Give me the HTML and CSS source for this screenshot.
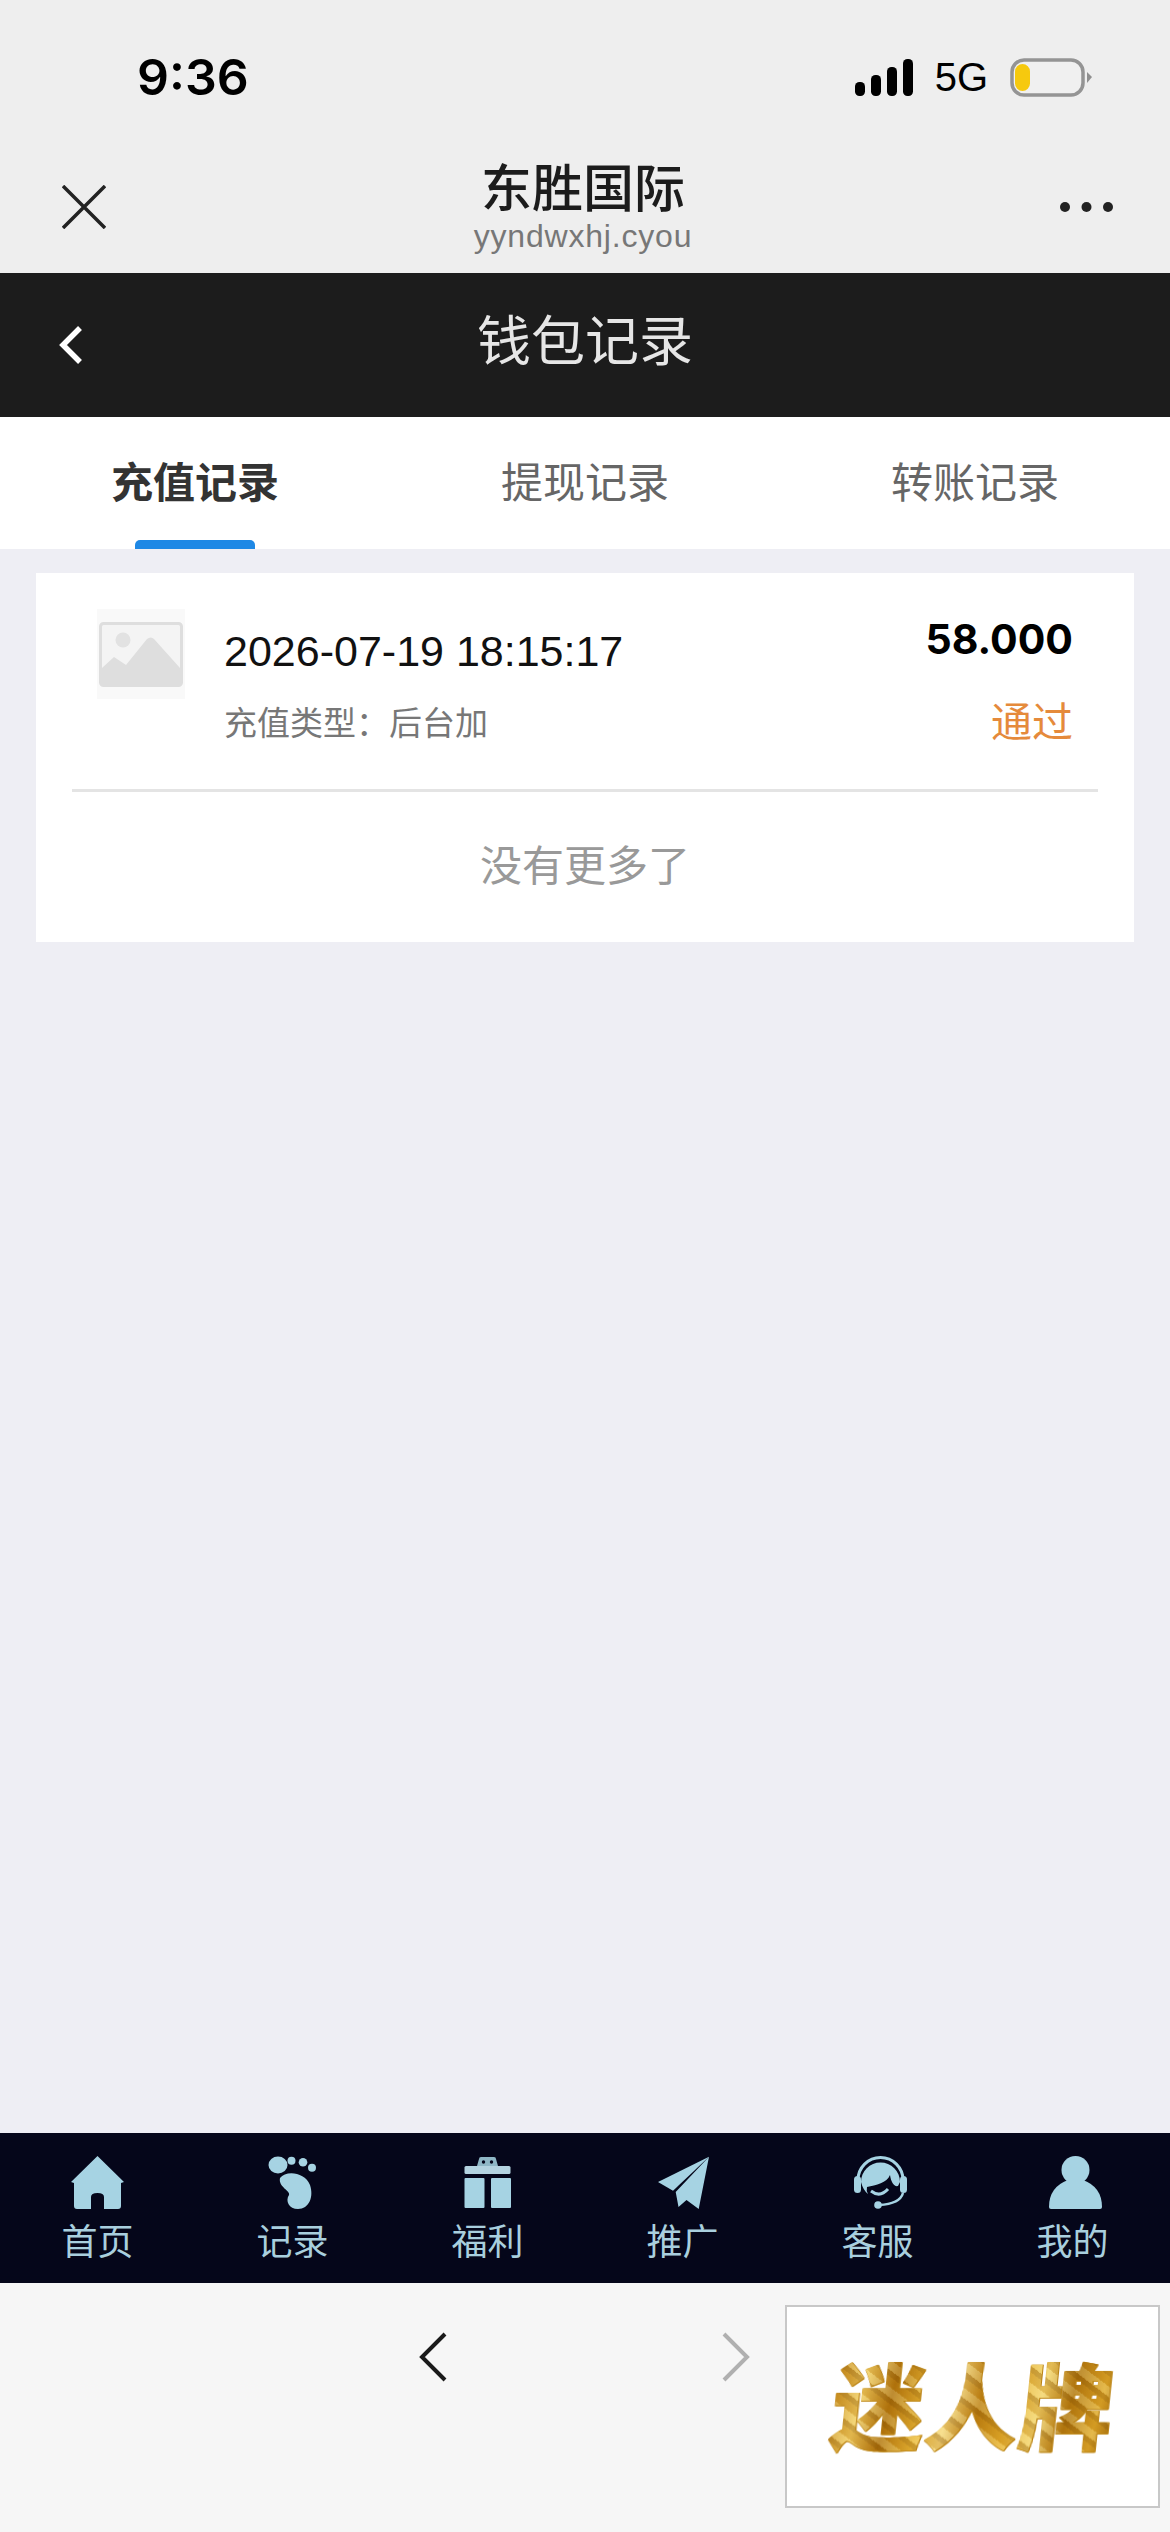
FILE: index.html
```html
<!DOCTYPE html>
<html>
	<head>
		<meta charset="utf-8">
		<title>钱包记录</title>
		<link rel="stylesheet" href="styles.css">
	</head>
	<body>
	<div class="phone">
		<div class="top_area">
			<div class="status_bar">
				<div class="time">9:36</div>
				<div class="status_right">
					<svg width="58" height="37" viewBox="0 0 58 37">
						<rect x="0" y="23" width="10" height="14" rx="4.5" fill="#000"/>
						<rect x="16" y="16" width="10" height="21" rx="4.5" fill="#000"/>
						<rect x="32" y="8" width="10" height="29" rx="4.5" fill="#000"/>
						<rect x="48" y="0" width="10" height="37" rx="4.5" fill="#000"/>
					</svg>
					<div class="net">5G</div>
					<svg width="82" height="39" viewBox="0 0 82 39">
						<rect x="2" y="2" width="71" height="35" rx="12" fill="#f0f0f0" stroke="#949494" stroke-width="3.5"/>
						<rect x="5" y="6" width="15" height="27" rx="7.5" fill="#f6c90e"/>
						<path d="M77 14 L82 19 L77 25 Z" fill="#8f8f8f"/>
					</svg>
				</div>
			</div>
			<div class="wx_header">
				<svg class="wx_icon" width="44" height="44" viewBox="0 0 44 44">
					<path d="M1 1 L43 43 M43 1 L1 43" stroke="#222" stroke-width="3.5" fill="none"/>
				</svg>
				<div class="wx_title">
					<div class="wx_name">东胜国际</div>
					<div class="wx_url">yyndwxhj.cyou</div>
				</div>
				<svg class="wx_icon" width="53" height="44" viewBox="0 0 53 44">
					<circle cx="5" cy="22" r="5" fill="#222"/>
					<circle cx="26.5" cy="22" r="5" fill="#222"/>
					<circle cx="48" cy="22" r="5" fill="#222"/>
				</svg>
			</div>
		</div>

		<div class="title_bar">
			<svg class="back" width="26" height="40" viewBox="0 0 26 40">
				<path d="M22 3 L5 20 L22 37" stroke="#fff" stroke-width="5.5" fill="none"/>
			</svg>
			<div class="page_title">钱包记录</div>
		</div>

		<div class="tabs">
			<div class="tab active">充值记录</div>
			<div class="tab">提现记录</div>
			<div class="tab">转账记录</div>
		</div>

		<div class="content">
			<div class="card">
				<div class="record">
					<div class="thumb">
						<svg width="84" height="65" viewBox="0 0 84 65">
							<rect x="1.5" y="1.5" width="81" height="62" rx="3" fill="#f4f4f4" stroke="#dedede" stroke-width="3"/>
							<circle cx="24" cy="18" r="7.5" fill="#e2e2e2"/>
							<path d="M3 46 L15 35 L27 43 L48 17 Q52 14 55 17 L81 46 L81 62 L3 62 Z" fill="#dedede"/>
						</svg>
					</div>
					<div class="record_info">
						<div class="record_date">2026-07-19 18:15:17</div>
						<div class="record_type">充值类型：后台加</div>
					</div>
					<div class="record_side">
						<div class="record_amount">58.000</div>
						<div class="record_state">通过</div>
					</div>
				</div>
				<div class="line"></div>
				<div class="no_more">没有更多了</div>
			</div>
		</div>

		<div class="nav">
			<div class="nav_item">
				<svg width="53" height="53" viewBox="0 0 53 53">
					<path d="M26.5 0 L53 26 L50 27 L50 50 Q50 53 47 53 L33 53 L33 41 Q33 37 26.5 37 Q20 37 20 41 L20 53 L6 53 Q3 53 3 50 L3 27 L0 26 Z" fill="#a6d3e3"/>
				</svg>
				<span>首页</span>
			</div>
			<div class="nav_item">
				<svg width="53" height="53" viewBox="0 0 53 53">
					<ellipse cx="12" cy="9" rx="9.5" ry="8.5" fill="#a6d3e3"/>
					<circle cx="25.5" cy="4.7" r="4" fill="#a6d3e3"/>
					<circle cx="37" cy="6.3" r="4.3" fill="#a6d3e3"/>
					<circle cx="46" cy="11.7" r="4" fill="#a6d3e3"/>
					<path d="M14 22 C20 14 39 16 44 29 C48 41 43 53 32 53 C23 53 19 45 23 39 C25 35 12 31 14 22 Z" fill="#a6d3e3"/>
				</svg>
				<span>记录</span>
			</div>
			<div class="nav_item">
				<svg width="53" height="53" viewBox="0 0 53 53">
					<path d="M16 10 L18 3 Q18 1 20 1 L33 1 Q35 1 35 3 L37 10 Z" fill="#8fb7c6"/>
					<circle cx="22.5" cy="6" r="1.7" fill="#05061a"/>
					<circle cx="30.5" cy="6" r="1.7" fill="#05061a"/>
					<rect x="3.5" y="10" width="46" height="8" rx="1.5" fill="#b4d3e0"/>
					<rect x="3.5" y="22" width="20" height="30" rx="1" fill="#a6d3e3"/>
					<rect x="30" y="22" width="20" height="30" rx="1" fill="#a6d3e3"/>
				</svg>
				<span>福利</span>
			</div>
			<div class="nav_item">
				<svg width="53" height="53" viewBox="0 0 53 53">
					<path d="M53 0.7 L2 26 L17 34.7 Z" fill="#a6d3e3"/>
					<path d="M53 0.7 L19.7 36 L22.5 51 L30.5 44 L42.7 53 Z" fill="#a6d3e3"/>
				</svg>
				<span>推广</span>
			</div>
			<div class="nav_item">
				<svg class="nudge" width="53" height="53" viewBox="0 0 53 53">
					<path d="M4 24 A22.5 22.5 0 0 1 49 24" stroke="#a6d3e3" stroke-width="3" fill="none"/>
					<rect x="0" y="20" width="7" height="17" rx="3.5" fill="#a6d3e3"/>
					<rect x="46" y="20" width="7" height="17" rx="3.5" fill="#a6d3e3"/>
					<path d="M7 26 A19.5 19.5 0 0 1 46 26 L44 30 C40 31 37 26 36 19 C33 27 22 29 13 31 Q12 35 14 38 Q9 34 7 26 Z" fill="#a6d3e3"/>
					<path d="M17 35 Q26 42 34 33" stroke="#a6d3e3" stroke-width="3" fill="none"/>
					<path d="M49 37 Q46 48 25 49" stroke="#a6d3e3" stroke-width="2.5" fill="none"/>
					<circle cx="24" cy="49" r="3.8" fill="#a6d3e3"/>
				</svg>
				<span>客服</span>
			</div>
			<div class="nav_item">
				<svg class="nudge" width="53" height="53" viewBox="0 0 53 53">
					<circle cx="26.5" cy="14" r="14" fill="#a6d3e3"/>
					<path d="M19 24 L34 24 Q53 31 53 51 Q53 53 51 53 L2 53 Q0 53 0 51 Q0 31 19 24 Z" fill="#a6d3e3"/>
				</svg>
				<span>我的</span>
			</div>
		</div>

		<div class="toolbar">
			<svg class="arrow" width="28" height="50" viewBox="0 0 28 50">
				<path d="M26 2 L3 25 L26 48" stroke="#1a1a1a" stroke-width="4" fill="none"/>
			</svg>
			<svg class="arrow arrow_next" width="28" height="50" viewBox="0 0 28 50">
				<path d="M2 2 L25 25 L2 48" stroke="#b0b0b0" stroke-width="4" fill="none"/>
			</svg>
			<div class="ad_box">
				<div class="ad_text">迷人牌</div>
			</div>
		</div>
	</div>
	</body>
</html>
```

FILE: styles.css
```css
html,
body {
  margin: 0;
  padding: 0;
}
body {
  font-family: "Liberation Sans", "Noto Sans CJK SC", sans-serif;
}
.phone {
  width: 1170px;
  height: 2532px;
  display: flex;
  flex-direction: column;
  background: #eeeef4;
  overflow: hidden;
}

/* status bar + wechat header */
.top_area {
  height: 273px;
  background: #eeeeee;
}
.status_bar {
  height: 154px;
  display: flex;
  align-items: center;
  justify-content: space-between;
  padding: 0 78px 0 137px;
}
.time {
  font-family: Inter, sans-serif;
  font-size: 50px;
  font-weight: 600;
  color: #000;
}
.status_right {
  display: flex;
  align-items: center;
  gap: 22px;
}
.net {
  font-size: 40px;
  color: #000;
}
.wx_header {
  display: flex;
  justify-content: space-between;
  align-items: flex-start;
  padding: 8px 57px 0 62px;
}
.wx_icon {
  margin-top: 23px;
}
.wx_title {
  text-align: center;
}
.wx_name {
  font-size: 51px;
  line-height: 56px;
  font-weight: 500;
  color: #1c1c1c;
}
.wx_url {
  font-size: 32px;
  line-height: 36px;
  letter-spacing: 0.8px;
  color: #777;
}

/* page title */
.title_bar {
  position: relative;
  height: 144px;
  display: flex;
  align-items: center;
  justify-content: center;
  background: #1c1c1c;
}
.back {
  position: absolute;
  left: 58px;
  top: 52px;
}
.page_title {
  font-size: 54px;
  line-height: 64px;
  margin-bottom: 6px;
  color: #e6e6e6;
}

/* tabs */
.tabs {
  height: 132px;
  display: grid;
  grid-template-columns: repeat(3, 1fr);
  background: #fff;
}
.tab {
  position: relative;
  padding-top: 42px;
  text-align: center;
  font-size: 42px;
  line-height: 50px;
  color: #666;
}
.tab.active {
  font-weight: 700;
  color: #333;
}
.tab.active:after {
  content: "";
  position: absolute;
  left: 135px;
  bottom: 0;
  width: 120px;
  height: 9px;
  border-radius: 5px 5px 0 0;
  background: #1e88e5;
}

/* record list */
.content {
  flex: 1;
  padding: 24px 36px 0;
}
.card {
  background: #fff;
}
.record {
  height: 216px;
  display: flex;
  padding: 0 61px 0 61px;
  box-sizing: border-box;
}
.thumb {
  width: 88px;
  height: 90px;
  margin-top: 36px;
  padding-top: 13px;
  box-sizing: border-box;
  display: flex;
  justify-content: center;
  background: #f9f9f9;
}
.record_info {
  flex: 1;
  margin-left: 39px;
  padding-top: 53px;
}
.record_date {
  font-size: 43px;
  line-height: 50px;
  color: #111;
}
.record_type {
  margin-top: 23px;
  font-size: 33px;
  line-height: 50px;
  color: #777;
}
.record_side {
  padding-top: 41px;
  text-align: right;
}
.record_amount {
  font-family: Inter, sans-serif;
  font-size: 41px;
  font-weight: 700;
  line-height: 50px;
  color: #000;
}
.record_state {
  margin-top: 34px;
  font-size: 41px;
  line-height: 50px;
  color: #e58a3b;
}
.line {
  height: 3px;
  margin: 0 36px;
  background: #e4e4e4;
}
.no_more {
  height: 150px;
  line-height: 150px;
  text-align: center;
  font-size: 42px;
  color: #999;
}

/* bottom nav */
.nav {
  height: 150px;
  display: grid;
  grid-template-columns: repeat(6, 1fr);
  background: #05061a;
}
.nav_item {
  display: flex;
  flex-direction: column;
  align-items: center;
  padding-top: 23px;
  font-size: 36px;
  line-height: 44px;
  color: #a9cfde;
}
.nav_item svg {
  overflow: visible;
}
.nav_item span {
  margin-top: 12px;
}
.nudge {
  transform: translateX(3px);
}

/* browser toolbar */
.toolbar {
  height: 249px;
  display: flex;
  align-items: flex-start;
  padding-left: 419px;
  background: #f6f6f6;
}
.arrow {
  margin-top: 49px;
}
.arrow_next {
  margin-left: 275px;
}
.ad_box {
  width: 375px;
  height: 203px;
  margin: 22px 0 0 35px;
  box-sizing: border-box;
  display: flex;
  align-items: center;
  justify-content: center;
  border: 2px solid #c8c8c8;
  background: #fff;
}
.ad_text {
  font-size: 94px;
  font-weight: 900;
  line-height: 110px;
  margin-top: 8px;
  transform: skewX(-6deg);
  color: transparent;
  background:
    repeating-linear-gradient(35deg, rgba(140, 85, 0, 0.35) 0 5px, rgba(255, 235, 160, 0.25) 5px 13px, rgba(190, 125, 10, 0.3) 13px 21px),
    linear-gradient(100deg, #b97a10 0%, #f0cf6a 12%, #a86c0c 22%, #e8b93c 33%, #f5dc8a 42%, #b67a12 52%, #e3ae30 62%, #f2d675 72%, #a9700e 82%, #dca82e 92%, #8f5c08 100%);
  -webkit-background-clip: text;
  background-clip: text;
  filter: drop-shadow(1.5px 0 0 #b98214) drop-shadow(0 1px 0 #c08a1c);
}
```
